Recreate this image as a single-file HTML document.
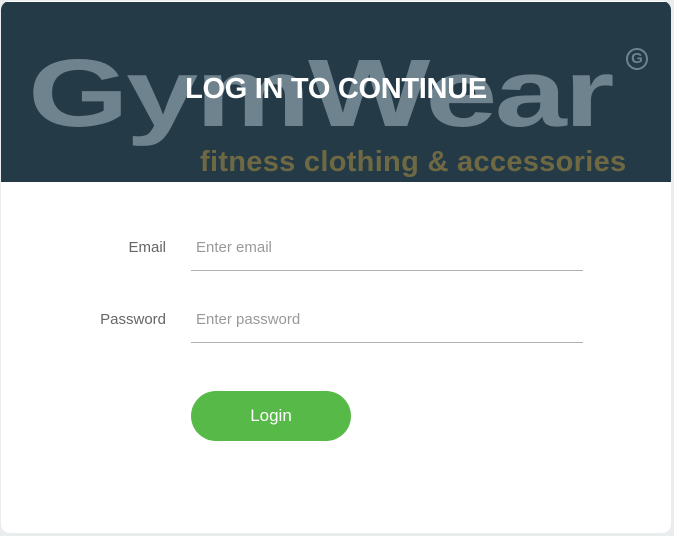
<!DOCTYPE html>
<html><head><style>
html,body{margin:0;padding:0;}
body{width:674px;height:536px;background:#e9eded;position:relative;overflow:hidden;font-family:"Liberation Sans",sans-serif;}
.card{position:absolute;left:1px;top:1px;width:670px;height:532px;background:#fff;border-radius:9px;overflow:hidden;}
.hdr{position:absolute;left:0;top:1px;width:670px;height:180px;background:#253a47;overflow:hidden;}
.gw{position:absolute;left:27px;top:44px;font-weight:bold;font-size:96px;color:#6f838f;letter-spacing:-2px;transform:scaleX(1.35);transform-origin:left top;line-height:1;white-space:nowrap;}
.sub{position:absolute;left:199px;top:146px;font-weight:bold;font-size:29px;color:#6e6942;white-space:nowrap;line-height:1;letter-spacing:0.3px;}
.reg{position:absolute;left:625px;top:46px;width:22px;height:22px;border:2px solid #6f838f;border-radius:50%;box-sizing:border-box;color:#6f838f;font-weight:bold;font-size:15px;text-align:center;line-height:18px;}
.title{position:absolute;left:0;width:670px;top:73px;text-align:center;color:#fff;font-weight:bold;font-size:29px;letter-spacing:-0.3px;line-height:1;}
.lbl{position:absolute;width:165px;text-align:right;color:#666;font-size:15px;}
.ph{position:absolute;left:195px;color:#999;font-size:15px;}
.line{position:absolute;left:190px;width:392px;height:1px;background:#b0b0b0;}
.btn{position:absolute;left:190px;top:390px;width:160px;height:50px;border-radius:25px;background:#57b947;color:#fff;font-size:17px;text-align:center;line-height:50px;}
</style></head><body>
<div class="card">
<div class="hdr">
<div class="gw">GymWear</div>
<div class="sub">fitness clothing &amp; accessories</div>
<div class="reg">G</div>
<div class="title">LOG IN TO CONTINUE</div>
</div>
<div class="lbl" style="top:238px">Email</div>
<div class="ph" style="top:238px">Enter email</div>
<div class="line" style="top:269px"></div>
<div class="lbl" style="top:310px">Password</div>
<div class="ph" style="top:310px">Enter password</div>
<div class="line" style="top:341px"></div>
<div class="btn">Login</div>
</div>
</body></html>
